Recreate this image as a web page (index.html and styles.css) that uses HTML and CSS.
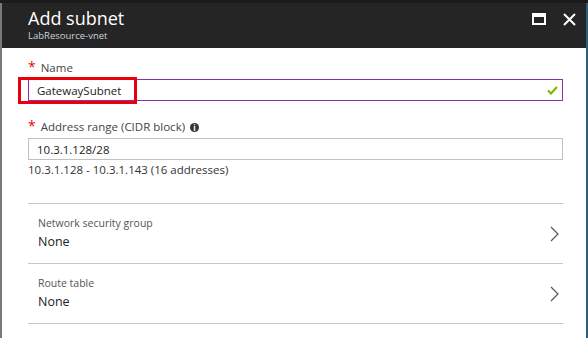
FILE: index.html
```html
<!DOCTYPE html>
<html lang="en">
<head>
    <meta charset="UTF-8">
    <meta name="viewport" content="width=device-width, initial-scale=1.0">
    <title>Add subnet</title>
    <link rel="stylesheet" href="styles.css">
</head>
<body>
    <div class="topstrip"></div>
    <div class="frame">
        <div class="leftedge"></div>
        <div class="blade">
            <div class="header">
                <div class="titles">
                    <h1>Add subnet</h1>
                    <p class="sub">LabResource-vnet</p>
                </div>
                <div class="controls">
                    <svg width="14" height="12" viewBox="0 0 14 12"><rect x="1" y="1.5" width="12" height="9.5" fill="none" stroke="#fff" stroke-width="2"/><rect x="0" y="0" width="14" height="4" fill="#fff"/></svg>
                    <svg width="13" height="13" viewBox="0 0 13 13"><path d="M1 1 L12 12 M12 1 L1 12" stroke="#fff" stroke-width="2"/></svg>
                </div>
            </div>
            <div class="form">
                <label class="lbl"><span class="req">*</span> Name</label>
                <div class="field valid">
                    <span>GatewaySubnet</span>
                    <svg class="check" width="11" height="9" viewBox="0 0 11 9"><path d="M1 4.5 L4 7.5 L10 1" fill="none" stroke="#7fba00" stroke-width="2.2"/></svg>
                    <div class="highlight"></div>
                </div>
                <label class="lbl second"><span class="req">*</span> Address range (CIDR block) <span class="info">i</span></label>
                <div class="field"><span>10.3.1.128/28</span></div>
                <p class="range">10.3.1.128 - 10.3.1.143 (16 addresses)</p>

                <div class="picker first">
                    <div>
                        <div class="pk-label">Network security group</div>
                        <div class="pk-value">None</div>
                    </div>
                    <svg width="9" height="16" viewBox="0 0 9 16"><path d="M1 1 L8 8 L1 15" fill="none" stroke="#555" stroke-width="1.2"/></svg>
                </div>
                <div class="picker">
                    <div>
                        <div class="pk-label">Route table</div>
                        <div class="pk-value">None</div>
                    </div>
                    <svg width="9" height="16" viewBox="0 0 9 16"><path d="M1 1 L8 8 L1 15" fill="none" stroke="#555" stroke-width="1.2"/></svg>
                </div>
            </div>
        </div>
        <div class="rightedge"></div>
    </div>
</body>
</html>
```

FILE: styles.css
```css
body{
    margin: 0;
    background-color: white;
    font-family: "Segoe UI", "Open Sans", sans-serif;
    height: 338px;
    overflow: hidden;
}
.topstrip{
    height: 3px;
    background-color: #1b1b1b;
}
.frame{
    display: flex;
    height: 335px;
}
.leftedge{
    width: 2px;
    background-color: #7a7a7a;
}
.rightedge{
    width: 2px;
    background-color: #2d5f7c;
}
.blade{
    flex: 1;
    display: flex;
    flex-direction: column;
}
.header{
    height: 45px;
    background-color: #252525;
    display: flex;
    justify-content: space-between;
    padding-left: 26px;
    padding-right: 10px;
}
h1{
    margin: 4px 0 0 0;
    color: white;
    font-weight: normal;
    font-size: 18px;
    line-height: 22px;
}
.sub{
    margin: 1px 0 0 0;
    color: #c5d2dc;
    font-size: 9.5px;
    line-height: 12px;
}
.controls{
    display: flex;
    gap: 17px;
    padding-top: 10px;
}
.form{
    padding: 10px 23px 0 26px;
}
.lbl{
    display: block;
    font-size: 11.5px;
    line-height: 18px;
    color: #444;
}
.lbl.second{
    margin-top: 16px;
}
.req{
    color: #e00;
    font-size: 14px;
    margin-right: 2px;
}
.info{
    display: inline-block;
    width: 9px;
    height: 9px;
    border-radius: 50%;
    background-color: #333;
    color: white;
    font-size: 8px;
    line-height: 9px;
    text-align: center;
    font-weight: bold;
    vertical-align: 0px;
    margin-left: 2px;
}
.field{
    position: relative;
    height: 20px;
    margin-top: 2px;
    border: 1px solid #c0c0c0;
    display: flex;
    align-items: center;
    justify-content: space-between;
    padding: 0 4px 0 8px;
    font-size: 11.5px;
    color: #222;
}
.field.valid{
    border-color: #8a30a8;
}
.check{
    margin-top: 1px;
}
.highlight{
    position: absolute;
    left: -11px;
    top: -3px;
    width: 113px;
    height: 21px;
    border: 3px solid #e8000b;
}
.range{
    margin: 2px 0 0 0;
    font-size: 11.5px;
    line-height: 16px;
    color: #333;
}
.picker{
    height: 59px;
    border-bottom: 1px solid #c8c8c8;
    display: flex;
    align-items: center;
    justify-content: space-between;
    padding: 0 4px 0 10px;
}
.picker.first{
    margin-top: 25px;
    border-top: 1px solid #c8c8c8;
}
.pk-label{
    font-size: 10.5px;
    line-height: 16px;
    color: #555;
}
.pk-value{
    font-size: 12.5px;
    line-height: 22px;
    color: #222;
}
```
